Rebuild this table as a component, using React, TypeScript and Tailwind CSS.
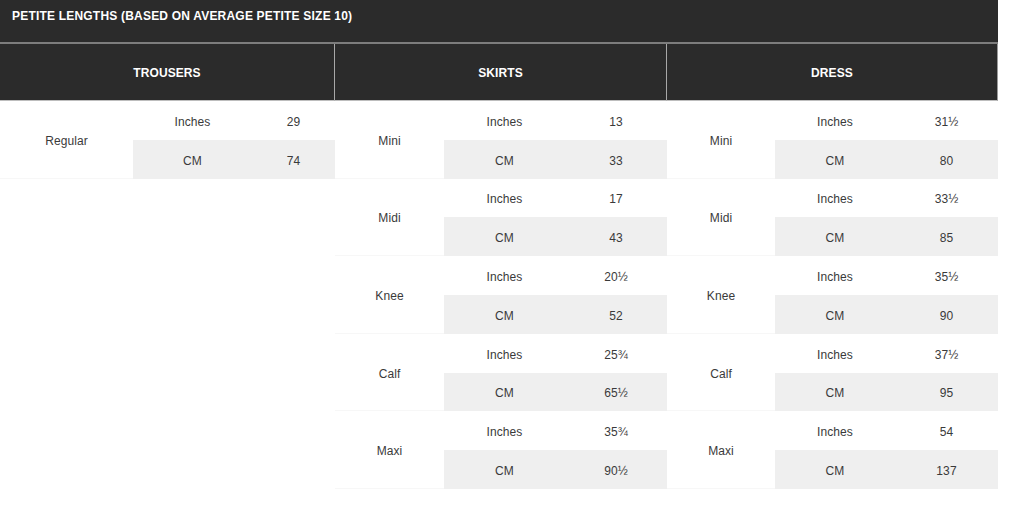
const font = { fontFamily: '"Liberation Sans", Arial, sans-serif' }

type Group = { label: string; inches: string; cm: string }

type Section = {
  title: string
  widths: [string, string, string]
  groups: Group[]
}

const SECTIONS: Section[] = [
  {
    title: 'TROUSERS',
    widths: ['w-[133px]', 'w-[119px]', 'w-[83px]'],
    groups: [{ label: 'Regular', inches: '29', cm: '74' }],
  },
  {
    title: 'SKIRTS',
    widths: ['w-[109px]', 'w-[121px]', 'w-[102px]'],
    groups: [
      { label: 'Mini', inches: '13', cm: '33' },
      { label: 'Midi', inches: '17', cm: '43' },
      { label: 'Knee', inches: '20½', cm: '52' },
      { label: 'Calf', inches: '25¾', cm: '65½' },
      { label: 'Maxi', inches: '35¾', cm: '90½' },
    ],
  },
  {
    title: 'DRESS',
    widths: ['w-[108px]', 'w-[120px]', 'w-[103px]'],
    groups: [
      { label: 'Mini', inches: '31½', cm: '80' },
      { label: 'Midi', inches: '33½', cm: '85' },
      { label: 'Knee', inches: '35½', cm: '90' },
      { label: 'Calf', inches: '37½', cm: '95' },
      { label: 'Maxi', inches: '54', cm: '137' },
    ],
  },
]

function SizeColumn({ section, last }: { section: Section; last: boolean }) {
  const [wl, wu, wv] = section.widths
  return (
    <div className="flex flex-col">
      <div
        className={`flex h-[57px] items-center justify-center border-b border-[#bdbdbd] bg-[#2b2b2b] pt-[2px] text-[12px] font-bold tracking-[0.1px] text-white ${
          last ? 'border-r border-r-[#9a9a9a]' : 'border-r border-r-[#a8a8a8]'
        }`}
      >
        {section.title}
      </div>
      {section.groups.map((g) => (
        <div key={g.label} className="flex h-[77.6px] text-[12px] tracking-[0.1px] text-[#3a3a3a]">
          <div className={`${wl} flex items-center justify-center border-b border-[#f7f7f7] pt-[3px]`}>{g.label}</div>
          <div className="flex flex-col">
            <div className="flex flex-1 pt-[3px]">
              <div className={`${wu} flex items-center justify-center`}>Inches</div>
              <div className={`${wv} flex items-center justify-center`}>{g.inches}</div>
            </div>
            <div className="flex flex-1 bg-[#efefef] pt-[3px]">
              <div className={`${wu} flex items-center justify-center`}>CM</div>
              <div className={`${wv} flex items-center justify-center`}>{g.cm}</div>
            </div>
          </div>
        </div>
      ))}
    </div>
  )
}

export default function App() {
  return (
    <div className="min-h-[515px] w-[1024px] bg-white" style={font}>
      <div className="w-[998px]">
        <div className="h-[42px] bg-[#2b2b2b] pl-[12px] pt-[7px] text-[12px] font-bold tracking-[0.2px] text-white">
          PETITE LENGTHS (BASED ON AVERAGE PETITE SIZE 10)
        </div>
        <div className="h-[2px] bg-[#7d7d7d]" />
        <div className="flex items-start">
          {SECTIONS.map((s, i) => (
            <SizeColumn key={s.title} section={s} last={i === SECTIONS.length - 1} />
          ))}
        </div>
      </div>
    </div>
  )
}
